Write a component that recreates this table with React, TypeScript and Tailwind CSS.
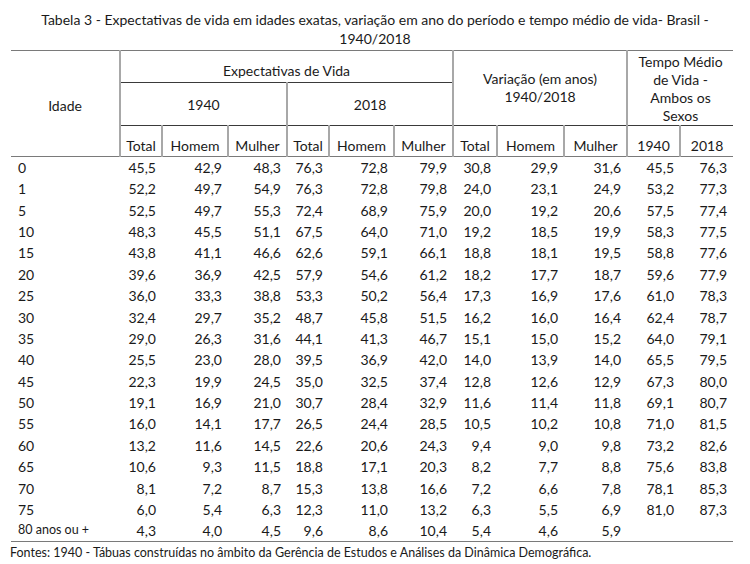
import React from "react";

type Row = [string, ...string[]];

const rows: Row[] = [
  ["0", "45,5", "42,9", "48,3", "76,3", "72,8", "79,9", "30,8", "29,9", "31,6", "45,5", "76,3"],
  ["1", "52,2", "49,7", "54,9", "76,3", "72,8", "79,8", "24,0", "23,1", "24,9", "53,2", "77,3"],
  ["5", "52,5", "49,7", "55,3", "72,4", "68,9", "75,9", "20,0", "19,2", "20,6", "57,5", "77,4"],
  ["10", "48,3", "45,5", "51,1", "67,5", "64,0", "71,0", "19,2", "18,5", "19,9", "58,3", "77,5"],
  ["15", "43,8", "41,1", "46,6", "62,6", "59,1", "66,1", "18,8", "18,1", "19,5", "58,8", "77,6"],
  ["20", "39,6", "36,9", "42,5", "57,9", "54,6", "61,2", "18,2", "17,7", "18,7", "59,6", "77,9"],
  ["25", "36,0", "33,3", "38,8", "53,3", "50,2", "56,4", "17,3", "16,9", "17,6", "61,0", "78,3"],
  ["30", "32,4", "29,7", "35,2", "48,7", "45,8", "51,5", "16,2", "16,0", "16,4", "62,4", "78,7"],
  ["35", "29,0", "26,3", "31,6", "44,1", "41,3", "46,7", "15,1", "15,0", "15,2", "64,0", "79,1"],
  ["40", "25,5", "23,0", "28,0", "39,5", "36,9", "42,0", "14,0", "13,9", "14,0", "65,5", "79,5"],
  ["45", "22,3", "19,9", "24,5", "35,0", "32,5", "37,4", "12,8", "12,6", "12,9", "67,3", "80,0"],
  ["50", "19,1", "16,9", "21,0", "30,7", "28,4", "32,9", "11,6", "11,4", "11,8", "69,1", "80,7"],
  ["55", "16,0", "14,1", "17,7", "26,5", "24,4", "28,5", "10,5", "10,2", "10,8", "71,0", "81,5"],
  ["60", "13,2", "11,6", "14,5", "22,6", "20,6", "24,3", "9,4", "9,0", "9,8", "73,2", "82,6"],
  ["65", "10,6", "9,3", "11,5", "18,8", "17,1", "20,3", "8,2", "7,7", "8,8", "75,6", "83,8"],
  ["70", "8,1", "7,2", "8,7", "15,3", "13,8", "16,6", "7,2", "6,6", "7,8", "78,1", "85,3"],
  ["75", "6,0", "5,4", "6,3", "12,3", "11,0", "13,2", "6,3", "5,5", "6,9", "81,0", "87,3"],
  ["80 anos ou +", "4,3", "4,0", "4,5", "9,6", "8,6", "10,4", "5,4", "4,6", "5,9", "", ""],
];

const widths = [109, 42, 66, 59, 42, 65, 59, 44, 67, 63, 53, 53];

const vline = "border-l-2 border-l-[#a8a8a8]";

export default function App() {
  return (
    <div className="h-[564px] w-[750px] bg-white font-['Lato','Open_Sans',sans-serif] text-[#1a1a1a]">
      <div className="pt-[10px] text-center text-[14px] leading-[19px]">
        <p>Tabela 3 - Expectativas de vida em idades exatas, variação em ano do período e tempo médio de vida- Brasil -</p>
        <p>1940/2018</p>
      </div>

      <table className="ml-[11px] mt-[2px] w-[722px] table-fixed border-collapse text-[14px]">
        <colgroup>
          {widths.map((w, i) => (
            <col key={i} style={{ width: w }} />
          ))}
        </colgroup>
        <thead>
          <tr className="h-[32px] border-t border-t-[#7a7a7a]">
            <th rowSpan={2} className="align-middle font-normal">
              <div className="translate-y-[17px]">Idade</div>
            </th>
            <th colSpan={6} className={`${vline} border-b border-b-[#3a3a3a] pt-[8px] font-normal`}>
              Expectativas de Vida
            </th>
            <th colSpan={3} rowSpan={2} className={`${vline} border-b border-b-[#3a3a3a] font-normal leading-[18px]`}>
              Variação (em anos)
              <br />
              1940/2018
            </th>
            <th colSpan={2} rowSpan={2} className={`${vline} border-b border-b-[#3a3a3a] px-2 pt-[2px] font-normal leading-[18px]`}>
              Tempo Médio de Vida - Ambos os Sexos
            </th>
          </tr>
          <tr className="h-[42px]">
            <th colSpan={3} className={`${vline} border-b border-b-[#3a3a3a] font-normal`}>
              1940
            </th>
            <th colSpan={3} className={`${vline} border-b border-b-[#3a3a3a] font-normal`}>
              2018
            </th>
          </tr>
          <tr className="h-[31px] border-b border-b-[#7a7a7a]">
            <th className="font-normal" />
            {["Total", "Homem", "Mulher", "Total", "Homem", "Mulher", "Total", "Homem", "Mulher", "1940", "2018"].map(
              (h, i) => (
                <th key={i} className={`${vline} align-bottom pb-0 font-normal`}>
                  {h}
                </th>
              ),
            )}
          </tr>
        </thead>
        <tbody>
          {rows.map((r, ri) => (
            <tr
              key={ri}
              className={ri === rows.length - 1 ? "h-[20px] border-b border-b-[#7a7a7a]" : "h-[21.4px]"}
            >
              <td className={`pl-[7px] ${ri === rows.length - 1 ? "text-[12.5px]" : ""}`}>{r[0]}</td>
              {r.slice(1).map((v, ci) => (
                <td key={ci} className="pr-[6px] text-right">
                  {v}
                </td>
              ))}
            </tr>
          ))}
        </tbody>
      </table>

      <p className="ml-[10px] mt-[2px] text-[12.5px] leading-[18px]">
        Fontes: 1940 - Tábuas construídas no âmbito da Gerência de Estudos e Análises da Dinâmica Demográfica.
      </p>
    </div>
  );
}
